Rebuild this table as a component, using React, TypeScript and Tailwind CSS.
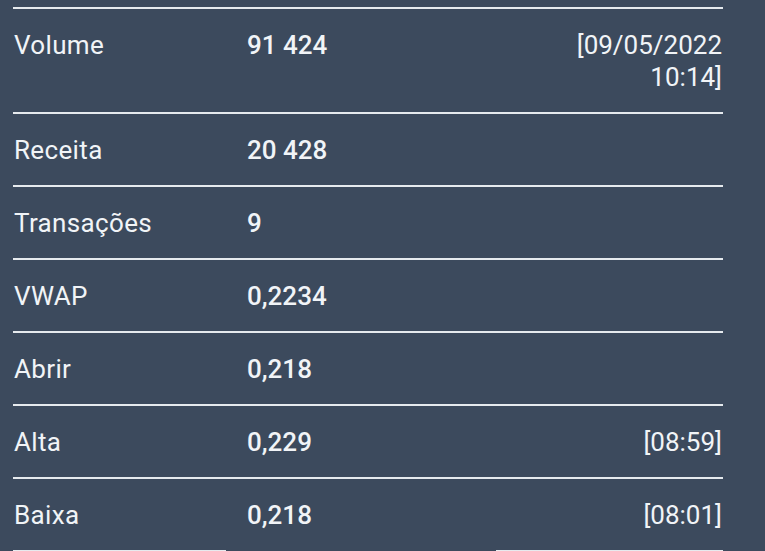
const rows: { label: string; value: string; extra?: string[] }[] = [
  { label: "Volume", value: "91 424", extra: ["[09/05/2022", "10:14]"] },
  { label: "Receita", value: "20 428" },
  { label: "Transações", value: "9" },
  { label: "VWAP", value: "0,2234" },
  { label: "Abrir", value: "0,218" },
  { label: "Alta", value: "0,229", extra: ["[08:59]"] },
  { label: "Baixa", value: "0,218", extra: ["[08:01]"] },
];

export default function App() {
  return (
    <div
      className="h-[551px] w-[765px] overflow-hidden bg-[#3c4a5d] pt-[7px] text-[26px] leading-[32px] text-[#f1f4f7]"
      style={{ fontFamily: "Roboto, 'Liberation Sans', sans-serif" }}
    >
      <div className="ml-[13px] w-[710px]">
        {rows.map((row) => (
          <div
            key={row.label}
            className="grid grid-cols-[233px_1fr_auto] border-t-2 border-[#e6eaee] pt-[19.6px] pb-[19.4px] px-px"
          >
            <span className="tracking-[0.35px]">{row.label}</span>
            <span className="font-medium">{row.value}</span>
            <span className="text-right">
              {row.extra?.map((line) => (
                <div key={line}>{line}</div>
              ))}
            </span>
          </div>
        ))}
        {/* partially visible edge of the next block */}
        <div className="flex h-[2px]">
          <div className="w-[213px] bg-[#e6eaee]" />
          <div className="w-[270px]" />
          <div className="flex-1 bg-[#e6eaee]" />
        </div>
      </div>
    </div>
  );
}
